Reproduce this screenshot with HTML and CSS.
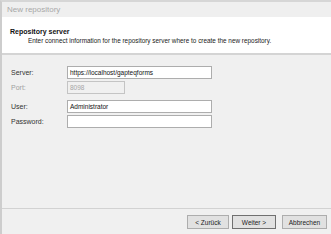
FILE: index.html
```html
<!DOCTYPE html>
<html>
<head>
<meta charset="utf-8">
<link rel="stylesheet" href="styles.css">
</head>
<body>
<div class="window">
  <div class="titlebar">New repository</div>
  <div class="header">
    <div class="h-title">Repository server</div>
    <div class="h-sub">Enter connect information for the repository server where to create the new repository.</div>
  </div>
  <div class="body">
    <div class="form">
      <div class="row"><span class="label">Server:</span><div class="input wide">https://localhost/gapteqforms</div></div>
      <div class="row"><span class="label disabled">Port:</span><div class="input short disabled">8098</div></div>
      <div class="row gap"><span class="label">User:</span><div class="input wide">Administrator</div></div>
      <div class="row"><span class="label">Password:</span><div class="input wide"></div></div>
    </div>
  </div>
  <div class="footer">
    <button class="btn back">&lt; Zurück</button>
    <button class="btn default">Weiter &gt;</button>
    <button class="btn cancel">Abbrechen</button>
  </div>
</div>
</body>
</html>
```
FILE: styles.css
```css
html, body {
  margin: 0;
  padding: 0;
  background: #f0f0f0;
}
body {
  font-family: "Liberation Sans", Arial, sans-serif;
  font-size: 7px;
  color: #1e1e1e;
  width: 331px;
  height: 234px;
  overflow: hidden;
}
.window {
  border-top: 2px solid #d6d6d6;
  border-left: 2px solid #cdcdcd;
  display: flex;
  flex-direction: column;
  box-sizing: border-box;
  height: 234px;
}
.titlebar {
  height: 15px;
  line-height: 15px;
  padding-left: 5px;
  font-size: 8px;
  color: #a8a8a8;
  background: #efefef;
}
.header {
  background: #ffffff;
  height: 38px;
  border-bottom: 2px solid #d4d4d4;
  padding: 10px 0 0 8px;
  box-sizing: border-box;
}
.h-title {
  font-weight: bold;
  font-size: 7px;
  line-height: 9px;
  color: #111;
}
.h-sub {
  padding-left: 18px;
  line-height: 10px;
  font-size: 6.4px;
  color: #222;
}
.body {
  flex: 1;
  padding: 11px 0 0 9px;
}
.form {
  display: flex;
  flex-direction: column;
  gap: 2px;
}
.row {
  display: flex;
  align-items: center;
  height: 13px;
}
.row.gap {
  margin-top: 4px;
}
.label {
  width: 56px;
  color: #333;
}
.label.disabled {
  color: #a0a0a0;
}
.input {
  height: 13px;
  box-sizing: border-box;
  border: 1px solid #adadad;
  background: #ffffff;
  line-height: 11px;
  padding-left: 2px;
  font-size: 6.5px;
  color: #111;
}
.input.wide {
  width: 145px;
}
.input.short {
  width: 58px;
}
.input.disabled {
  background: #f0f0f0;
  border-color: #c4c4c4;
  color: #a6a6a6;
}
.footer {
  height: 26px;
  border-top: 1px solid #d2d2d2;
  display: flex;
  justify-content: flex-end;
  align-items: flex-start;
  padding: 6px 4px 0 0;
  gap: 3px;
  box-sizing: border-box;
}
.btn {
  font-family: "Liberation Sans", Arial, sans-serif;
  font-size: 6.5px;
  height: 14px;
  width: 43px;
  padding: 0;
  margin: 0;
  background: #e1e1e1;
  border: 1px solid #adadad;
  color: #222;
  border-radius: 0;
}
.btn.back {
  width: 42px;
}
.btn.default {
  border-color: #707070;
  width: 44px;
}
.btn.cancel {
  width: 45px;
  margin-left: 3px;
}
```
